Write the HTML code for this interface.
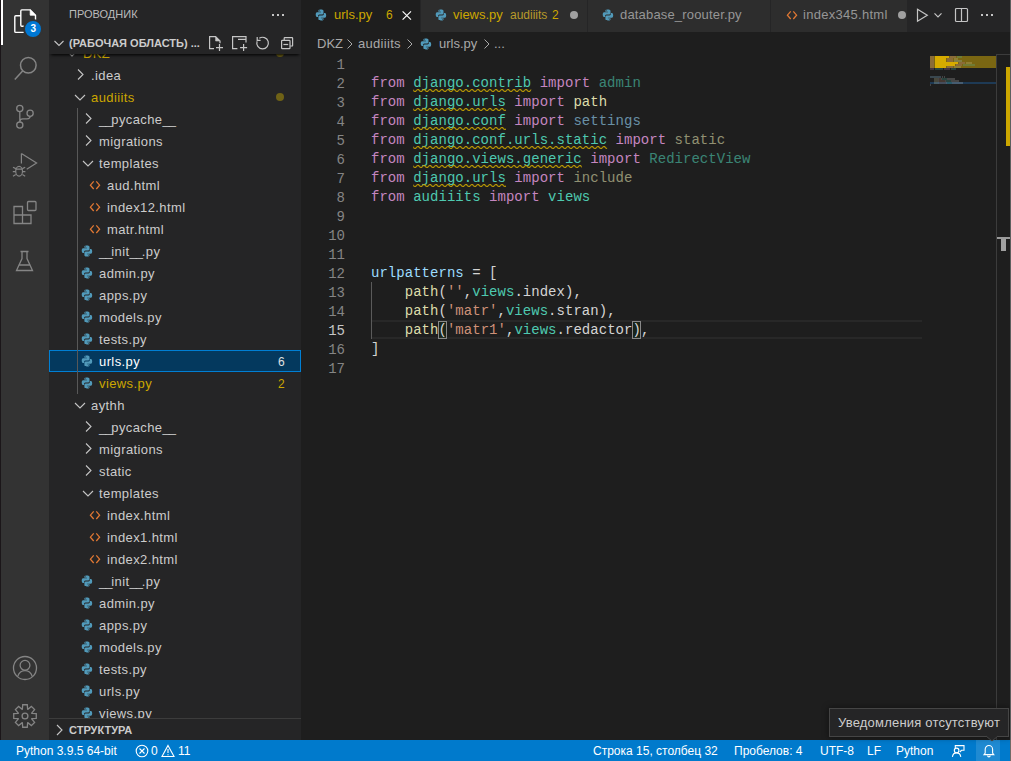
<!DOCTYPE html>
<html><head><meta charset="utf-8">
<style>
*{margin:0;padding:0;box-sizing:border-box}
html,body{width:1011px;height:761px;overflow:hidden;background:#1e1e1e;font-family:"Liberation Sans",sans-serif;font-size:13px;color:#cccccc}
.abs{position:absolute}
svg{display:block;overflow:visible}
.t{position:absolute;white-space:nowrap}
#edge{left:0;top:0;width:1px;height:740px;background:#1b1619}
#act{left:1px;top:0;width:48px;height:740px;background:#333333}
#ind{left:1px;top:0;width:2px;height:45px;background:#ffffff}
#side{left:49px;top:0;width:252px;height:740px;background:#252526;overflow:hidden}
#editor{left:301px;top:0;width:710px;height:740px;background:#1e1e1e;overflow:hidden}
#status{left:0;top:740px;width:1011px;height:21px;background:#007acc;color:#fff;font-size:12px}
.row{position:absolute;left:0;width:252px;height:22px;line-height:22px}
.row.sel{background:#04395e;outline:1px solid #007fd4;outline-offset:-1px}
.row .chev{position:absolute;top:1px}
.row .ic{position:absolute;top:0}
.row .nm{position:absolute;top:1px;white-space:nowrap;font-size:13px;letter-spacing:0.4px}
.u{letter-spacing:-1.1px}
.row .badge{position:absolute;left:229px;top:1px;font-size:12px}
.row .dot{position:absolute;left:227px;top:7px;width:8px;height:8px;border-radius:4px;background:#6f6216}
#tree{position:absolute;left:0;top:54px;width:252px;height:664px;overflow:hidden}
#tree .inner{position:absolute;left:0;top:-54px;width:252px;height:740px}
.code{position:absolute;left:70px;font-family:"Liberation Mono",monospace;font-size:14px;letter-spacing:0.03px;line-height:19px;height:19px;white-space:pre;color:#d4d4d4}
.ln{position:absolute;left:0;width:44px;text-align:right;font-family:"Liberation Mono",monospace;font-size:14px;line-height:19px;height:19px;color:#858585}
.kw{color:#c586c0}.mod{color:#4ec9b0}.fn{color:#dcdcaa}.var{color:#9cdcfe}.str{color:#ce9178}
.fade{opacity:.6}

.tab{position:absolute;top:0;height:32px;background:#2d2d2d;border-right:1px solid #252526}
.tab.act{background:#1e1e1e}
</style></head><body>
<svg width="0" height="0" style="position:absolute"><symbol id="py" viewBox="0 0 12 22"><path fill="#519aba" d="M5.9 5.5c-2.6 0-2.5 1.1-2.5 1.1v1.2h2.6v.4H2.4S.7 8 .7 10.6s1.5 2.5 1.5 2.5h.9v-1.2s-.1-1.5 1.5-1.5h2.5s1.4 0 1.4-1.4V6.9S8.7 5.5 5.9 5.5zM4.5 6.3a.45.45 0 1 1 0 .9.45.45 0 0 1 0-.9z"/><path fill="#519aba" d="M6 16.5c2.6 0 2.5-1.1 2.5-1.1v-1.2H5.9v-.4h3.6s1.7.2 1.7-2.4-1.5-2.5-1.5-2.5h-.9v1.2s.1 1.5-1.5 1.5H4.8s-1.4 0-1.4 1.4v2.1s-.2 1.4 2.6 1.4zm1.4-.8a.45.45 0 1 1 0-.9.45.45 0 0 1 0 .9z"/></symbol><symbol id="ht" viewBox="0 0 12 22"><path d="M4.7 7.3 L1.4 11.2 L4.7 15 M7.3 7.3 L10.6 11.2 L7.3 15" fill="none" stroke="#e37933" stroke-width="1.25"/></symbol><defs><pattern id="sqp" patternUnits="userSpaceOnUse" width="6" height="3"><g fill="#cca700"><polygon points="5.5,0 2.5,3 1.1,3 4.1,0"/><polygon points="4,0 6,2 6,0.6 5.4,0"/><polygon points="0,2 1,3 2.4,3 0,0.6"/></g></pattern></defs></svg>
<div id="edge" class="abs"></div>
<div id="act" class="abs"></div>

<svg class="abs" style="left:0;top:0" width="49" height="740" viewBox="0 0 49 740" fill="none" stroke-width="1.5">
 <!-- explorer -->
 <g stroke="#ffffff" stroke-width="1.4" transform="translate(0.6,0)">
  <path d="M21.2 9.9 H29.6 L34.9 15.2 V25.3 Q34.9 26.3 33.9 26.3 H21.2 Q20.2 26.3 20.2 25.3 V10.9 Q20.2 9.9 21.2 9.9 Z" />
  <path d="M29.6 9.9 V15.2 H34.9 Z" fill="#ffffff" stroke-width="0.8"/>
  <path d="M20.2 15.8 H15.2 Q14.2 15.8 14.2 16.8 V31.4 Q14.2 32.4 15.2 32.4 H27" />
 </g>
 <!-- search -->
 <g stroke="#858585">
  <circle cx="28.3" cy="65.2" r="7.8"/>
  <path d="M22.8 70.8 L14.8 79.6"/>
 </g>
 <!-- source control -->
 <g stroke="#858585" stroke-width="1.3">
  <circle cx="19.8" cy="108.5" r="3.1"/>
  <circle cx="30.1" cy="113.2" r="3.1"/>
  <circle cx="19.8" cy="125.1" r="3.1"/>
  <path d="M19.8 111.6 V122 M30.1 116.3 c0 1.8 -1.2 2.5 -3 2.5 h-4.3 c-1.9 0 -2.9 0.9 -2.9 2.6"/>
 </g>
 <!-- run debug -->
 <g stroke="#858585" stroke-width="1.2">
  <path d="M21.4 153.6 V163.5 M21.4 153.6 L36.6 163.1 L26.7 169.2"/>
  <ellipse cx="19.1" cy="171.2" rx="3.4" ry="4.9"/>
  <path d="M15.8 169.2 H22.4 M13 167.2 l2.8 1.4 M25.2 167.2 l-2.8 1.4 M12.8 171.6 h2.9 M25.4 171.6 h-2.9 M13 176.2 l2.8 -1.6 M25.2 176.2 l-2.8 -1.6"/>
 </g>
 <!-- extensions -->
 <g stroke="#858585" stroke-width="1.3">
  <path d="M14 206.5 h8.5 v8.5 h8.5 v8.5 h-17 z M14 215 h8.5 v8.5"/>
  <rect x="27.5" y="201.5" width="8.5" height="9" rx="1"/>
 </g>
 <!-- testing -->
 <g stroke="#858585" stroke-width="1.3">
  <path d="M20.5 251.5 h8 M22 251.5 v7 l-5.5 12 h16 l-5.5 -12 v-7 M18.5 265 h12"/>
 </g>
 <!-- accounts -->
 <g stroke="#858585" stroke-width="1.3">
  <circle cx="25" cy="668" r="11.5"/>
  <circle cx="25" cy="665.3" r="4.9"/>
  <path d="M17.6 676.6 c1.4 -3.8 4.2 -5.9 7.4 -5.9 s6 2.1 7.4 5.9"/>
 </g>
 <!-- settings -->
 <g stroke="#858585" stroke-width="1.3">
  <circle cx="25" cy="716" r="2.9"/>
  <path d="M31.81 713.36 L36.27 713.72 L36.27 718.28 L31.81 718.64 L31.68 718.95 L34.59 722.35 L31.35 725.59 L27.95 722.68 L27.64 722.81 L27.28 727.27 L22.72 727.27 L22.36 722.81 L22.05 722.68 L18.65 725.59 L15.41 722.35 L18.32 718.95 L18.19 718.64 L13.73 718.28 L13.73 713.72 L18.19 713.36 L18.32 713.05 L15.41 709.65 L18.65 706.41 L22.05 709.32 L22.36 709.19 L22.72 704.73 L27.28 704.73 L27.64 709.19 L27.95 709.32 L31.35 706.41 L34.59 709.65 L31.68 713.05 Z" stroke-linejoin="miter"/>
 </g>
</svg>
<div class="abs" style="left:23.2px;top:18.8px;width:20px;height:20px;border-radius:10px;border:2px solid #333333;background:#0078d4;color:#fff;font-size:10px;font-weight:bold;line-height:16px;text-align:center">3</div>

<div id="ind" class="abs"></div>
<div id="side" class="abs">
<div class="t" style="left:20px;top:7px;font-size:11px;line-height:14px;color:#bbbbbb">ПРОВОДНИК</div>
<div class="abs" style="left:223px;top:14px;width:2px;height:2px;background:#c5c5c5;box-shadow:5px 0 #c5c5c5,10px 0 #c5c5c5"></div>
<div id="tree"><div class="inner">
<div class="row" style="top:42px"><svg class="chev" style="left:15px" width="16" height="22" viewBox="0 0 16 22"><path d="M3 8 L8 13 L13 8" fill="none" stroke="#c5c5c5" stroke-width="1.1"/></svg><span class="nm" style="left:34px;color:#cca700">DKZ</span><span class="dot"></span></div>
<div class="row" style="top:64px"><svg class="chev" style="left:23px" width="16" height="22" viewBox="0 0 16 22"><path d="M6 4.5 L11 9.5 L6 14.5" fill="none" stroke="#c5c5c5" stroke-width="1.1"/></svg><span class="nm" style="left:42px">.idea</span></div>
<div class="row" style="top:86px"><svg class="chev" style="left:23px" width="16" height="22" viewBox="0 0 16 22"><path d="M3 8 L8 13 L13 8" fill="none" stroke="#c5c5c5" stroke-width="1.1"/></svg><span class="nm" style="left:42px;color:#cca700">audiiits</span><span class="dot"></span></div>
<div class="row" style="top:108px"><svg class="chev" style="left:31px" width="16" height="22" viewBox="0 0 16 22"><path d="M6 4.5 L11 9.5 L6 14.5" fill="none" stroke="#c5c5c5" stroke-width="1.1"/></svg><span class="nm" style="left:50px"><span class="u">_</span><span class="u">_</span>pycache<span class="u">_</span><span class="u">_</span></span></div>
<div class="row" style="top:130px"><svg class="chev" style="left:31px" width="16" height="22" viewBox="0 0 16 22"><path d="M6 4.5 L11 9.5 L6 14.5" fill="none" stroke="#c5c5c5" stroke-width="1.1"/></svg><span class="nm" style="left:50px">migrations</span></div>
<div class="row" style="top:152px"><svg class="chev" style="left:31px" width="16" height="22" viewBox="0 0 16 22"><path d="M3 8 L8 13 L13 8" fill="none" stroke="#c5c5c5" stroke-width="1.1"/></svg><span class="nm" style="left:50px">templates</span></div>
<div class="row" style="top:174px"><svg class="ic" style="left:40px" width="12" height="22" viewBox="0 0 12 22"><use href="#ht"/></svg><span class="nm" style="left:58px">aud.html</span></div>
<div class="row" style="top:196px"><svg class="ic" style="left:40px" width="12" height="22" viewBox="0 0 12 22"><use href="#ht"/></svg><span class="nm" style="left:58px">index12.html</span></div>
<div class="row" style="top:218px"><svg class="ic" style="left:40px" width="12" height="22" viewBox="0 0 12 22"><use href="#ht"/></svg><span class="nm" style="left:58px">matr.html</span></div>
<div class="row" style="top:240px"><svg class="ic" style="left:32px" width="12" height="22" viewBox="0 0 12 22"><use href="#py"/></svg><span class="nm" style="left:50px"><span class="u">_</span><span class="u">_</span>init<span class="u">_</span><span class="u">_</span>.py</span></div>
<div class="row" style="top:262px"><svg class="ic" style="left:32px" width="12" height="22" viewBox="0 0 12 22"><use href="#py"/></svg><span class="nm" style="left:50px">admin.py</span></div>
<div class="row" style="top:284px"><svg class="ic" style="left:32px" width="12" height="22" viewBox="0 0 12 22"><use href="#py"/></svg><span class="nm" style="left:50px">apps.py</span></div>
<div class="row" style="top:306px"><svg class="ic" style="left:32px" width="12" height="22" viewBox="0 0 12 22"><use href="#py"/></svg><span class="nm" style="left:50px">models.py</span></div>
<div class="row" style="top:328px"><svg class="ic" style="left:32px" width="12" height="22" viewBox="0 0 12 22"><use href="#py"/></svg><span class="nm" style="left:50px">tests.py</span></div>
<div class="row sel" style="top:350px"><svg class="ic" style="left:32px" width="12" height="22" viewBox="0 0 12 22"><use href="#py"/></svg><span class="nm" style="left:50px;color:#ffffff">urls.py</span><span class="badge" style="color:#e0e0e0">6</span></div>
<div class="row" style="top:372px"><svg class="ic" style="left:32px" width="12" height="22" viewBox="0 0 12 22"><use href="#py"/></svg><span class="nm" style="left:50px;color:#cca700">views.py</span><span class="badge" style="color:#cca700">2</span></div>
<div class="row" style="top:394px"><svg class="chev" style="left:23px" width="16" height="22" viewBox="0 0 16 22"><path d="M3 8 L8 13 L13 8" fill="none" stroke="#c5c5c5" stroke-width="1.1"/></svg><span class="nm" style="left:42px">aythh</span></div>
<div class="row" style="top:416px"><svg class="chev" style="left:31px" width="16" height="22" viewBox="0 0 16 22"><path d="M6 4.5 L11 9.5 L6 14.5" fill="none" stroke="#c5c5c5" stroke-width="1.1"/></svg><span class="nm" style="left:50px"><span class="u">_</span><span class="u">_</span>pycache<span class="u">_</span><span class="u">_</span></span></div>
<div class="row" style="top:438px"><svg class="chev" style="left:31px" width="16" height="22" viewBox="0 0 16 22"><path d="M6 4.5 L11 9.5 L6 14.5" fill="none" stroke="#c5c5c5" stroke-width="1.1"/></svg><span class="nm" style="left:50px">migrations</span></div>
<div class="row" style="top:460px"><svg class="chev" style="left:31px" width="16" height="22" viewBox="0 0 16 22"><path d="M6 4.5 L11 9.5 L6 14.5" fill="none" stroke="#c5c5c5" stroke-width="1.1"/></svg><span class="nm" style="left:50px">static</span></div>
<div class="row" style="top:482px"><svg class="chev" style="left:31px" width="16" height="22" viewBox="0 0 16 22"><path d="M3 8 L8 13 L13 8" fill="none" stroke="#c5c5c5" stroke-width="1.1"/></svg><span class="nm" style="left:50px">templates</span></div>
<div class="row" style="top:504px"><svg class="ic" style="left:40px" width="12" height="22" viewBox="0 0 12 22"><use href="#ht"/></svg><span class="nm" style="left:58px">index.html</span></div>
<div class="row" style="top:526px"><svg class="ic" style="left:40px" width="12" height="22" viewBox="0 0 12 22"><use href="#ht"/></svg><span class="nm" style="left:58px">index1.html</span></div>
<div class="row" style="top:548px"><svg class="ic" style="left:40px" width="12" height="22" viewBox="0 0 12 22"><use href="#ht"/></svg><span class="nm" style="left:58px">index2.html</span></div>
<div class="row" style="top:570px"><svg class="ic" style="left:32px" width="12" height="22" viewBox="0 0 12 22"><use href="#py"/></svg><span class="nm" style="left:50px"><span class="u">_</span><span class="u">_</span>init<span class="u">_</span><span class="u">_</span>.py</span></div>
<div class="row" style="top:592px"><svg class="ic" style="left:32px" width="12" height="22" viewBox="0 0 12 22"><use href="#py"/></svg><span class="nm" style="left:50px">admin.py</span></div>
<div class="row" style="top:614px"><svg class="ic" style="left:32px" width="12" height="22" viewBox="0 0 12 22"><use href="#py"/></svg><span class="nm" style="left:50px">apps.py</span></div>
<div class="row" style="top:636px"><svg class="ic" style="left:32px" width="12" height="22" viewBox="0 0 12 22"><use href="#py"/></svg><span class="nm" style="left:50px">models.py</span></div>
<div class="row" style="top:658px"><svg class="ic" style="left:32px" width="12" height="22" viewBox="0 0 12 22"><use href="#py"/></svg><span class="nm" style="left:50px">tests.py</span></div>
<div class="row" style="top:680px"><svg class="ic" style="left:32px" width="12" height="22" viewBox="0 0 12 22"><use href="#py"/></svg><span class="nm" style="left:50px">urls.py</span></div>
<div class="row" style="top:702px"><svg class="ic" style="left:32px" width="12" height="22" viewBox="0 0 12 22"><use href="#py"/></svg><span class="nm" style="left:50px">views.py</span></div>
<div class="abs" style="left:28px;top:108px;width:1px;height:286px;background:#585858"></div>
</div></div>
<!-- sticky header -->
<div class="abs" style="left:0;top:30px;width:252px;height:24px;background:#252526;box-shadow:0 3px 3px -2px #000"></div>
<svg class="abs" style="left:5px;top:31px" width="16" height="24" viewBox="0 0 16 24"><path d="M0.5 10 L5 14.5 L9.5 10" fill="none" stroke="#c5c5c5" stroke-width="1.1"/></svg>
<div class="t" style="left:20px;top:36px;font-size:11px;font-weight:bold;line-height:14px;color:#cccccc">(РАБОЧАЯ ОБЛАСТЬ) ...</div>
<svg class="abs" style="left:0;top:0" width="252" height="60" viewBox="49 0 252 60" fill="none" stroke="#c5c5c5" stroke-width="1.2">
 <path d="M214 48.6 H209.6 V36.6 H215.6 L220 41 V43.2"/>
 <path d="M215.6 36.6 V41 H220 Z" fill="#c5c5c5" stroke-width="0.6"/>
 <path d="M216 47.6 H223 M219.5 44.1 V51.1"/>
 <path d="M237.4 48.6 H232.6 V36.6 H246 V42.4 M238 39.4 H246"/>
 <path d="M240.1 47.6 H247.1 M243.6 44.1 V51.1"/>
 <path d="M259.3 38.3 A5.8 5.8 0 1 1 257.1 41.2"/>
 <path d="M257.2 37 V40.4 H260.6"/>
 <path d="M284.2 40 V38.2 Q284.2 37.6 284.8 37.6 H292 Q292.6 37.6 292.6 38.2 V45.4 Q292.6 46 292 46 H290.2"/>
 <rect x="281.6" y="40.3" width="8.4" height="8.4" rx="0.8"/>
 <path d="M283.4 44.5 H288.2"/>
</svg>
<div class="abs" style="left:0;top:718px;width:252px;height:1px;background:#3c3c3c"></div>
<svg class="abs" style="left:7px;top:724px" width="8" height="12" viewBox="0 0 8 12"><path d="M1 1 L6 6 L1 11" fill="none" stroke="#c5c5c5" stroke-width="1.1"/></svg>
<div class="t" style="left:20px;top:723px;font-size:11px;font-weight:bold;line-height:14px;color:#cccccc">СТРУКТУРА</div>
</div>
<div id="editor" class="abs">
<div class="abs" style="left:0;top:0;width:710px;height:32px;background:#252526"></div>
<div class="tab act" style="left:0;width:120px">
 <svg class="abs" style="left:14px;top:4px" width="12" height="22" viewBox="0 0 12 22"><use href="#py"/></svg>
 <span class="t" style="left:33px;top:0;line-height:30px;color:#cca700">urls.py</span>
 <span class="t" style="left:85px;top:0;line-height:30px;color:#cca700;font-size:12px">6</span>
 <svg class="abs" style="left:101px;top:11px" width="10" height="10" viewBox="0 0 10 10"><path d="M0.6 0.4 L9 8.6 M9 0.4 L0.6 8.6" stroke="#ffffff" stroke-width="1.15"/></svg>
</div>
<div class="tab" style="left:120px;width:167px">
 <svg class="abs" style="left:14px;top:4px" width="12" height="22" viewBox="0 0 12 22"><use href="#py"/></svg>
 <span class="t" style="left:32px;top:0;line-height:30px;color:#cca700">views.py</span>
 <span class="t" style="left:89px;top:0;line-height:30px;color:#b89a2a;font-size:12px">audiiits</span>
 <span class="t" style="left:131px;top:0;line-height:30px;color:#cca700;font-size:12px">2</span>
 <div class="abs" style="left:149px;top:11px;width:8px;height:8px;border-radius:4px;background:#a0a0a0"></div>
</div>
<div class="tab" style="left:287px;width:183px">
 <svg class="abs" style="left:14px;top:4px" width="12" height="22" viewBox="0 0 12 22"><use href="#py"/></svg>
 <span class="t" style="left:32px;top:0;line-height:30px;color:#969696;letter-spacing:0.17px">database_roouter.py</span>
</div>
<div class="tab" style="left:470px;width:137px">
 <svg class="abs" style="left:15px;top:4px" width="12" height="22" viewBox="0 0 12 22"><use href="#ht"/></svg>
 <span class="t" style="left:32px;top:0;line-height:30px;color:#969696;letter-spacing:0.28px">index345.html</span>
 <div class="abs" style="left:127px;top:11px;width:8px;height:8px;border-radius:4px;background:#a0a0a0"></div>
</div>
<svg class="abs" style="left:614px;top:7px" width="90" height="18" viewBox="0 0 90 18" fill="none" stroke="#c5c5c5" stroke-width="1.2">
 <path d="M2.5 2.3 L12.3 8.3 L2.5 14.3 Z"/>
 <path d="M19.5 6.3 L23 9.8 L26.5 6.3"/>
 <rect x="40.5" y="1.5" width="12" height="13" rx="1"/><path d="M46.5 1.5 v13"/>
</svg>
<div class="abs" style="left:680px;top:14px;width:2px;height:2px;background:#c5c5c5;box-shadow:5px 0 #c5c5c5,10px 0 #c5c5c5"></div>

<!-- breadcrumbs -->
<span class="t" style="left:16px;top:36px;line-height:16px;color:#a9a9a9">DKZ</span>
<svg class="abs" style="left:45px;top:38px" width="8" height="12" viewBox="0 0 8 12"><path d="M1.5 1.5 L6 6 L1.5 10.5" fill="none" stroke="#a9a9a9" stroke-width="1"/></svg>
<span class="t" style="left:57px;top:36px;line-height:16px;color:#a9a9a9;letter-spacing:0.3px">audiiits</span>
<svg class="abs" style="left:105px;top:38px" width="8" height="12" viewBox="0 0 8 12"><path d="M1.5 1.5 L6 6 L1.5 10.5" fill="none" stroke="#a9a9a9" stroke-width="1"/></svg>
<svg class="abs" style="left:119px;top:33px" width="12" height="22" viewBox="0 0 12 22"><use href="#py"/></svg>
<span class="t" style="left:138px;top:36px;line-height:16px;color:#a9a9a9">urls.py</span>
<svg class="abs" style="left:182px;top:38px" width="8" height="12" viewBox="0 0 8 12"><path d="M1.5 1.5 L6 6 L1.5 10.5" fill="none" stroke="#a9a9a9" stroke-width="1"/></svg>
<span class="t" style="left:193px;top:36px;line-height:16px;color:#a9a9a9">...</span>

<div class="abs" style="left:70px;top:320px;width:551px;height:19px;border-top:2px solid #282828;border-bottom:2px solid #282828"></div>
<div class="abs" style="left:70px;top:282px;width:1px;height:57px;background:#5a5a5a"></div>
<div class="abs" style="left:137.4px;top:321px;width:8.4px;height:18px;border:1px solid #888888;background:rgba(0,100,0,.1)"></div>
<div class="abs" style="left:331.3px;top:321px;width:8.4px;height:18px;border:1px solid #888888;background:rgba(0,100,0,.1)"></div>
<div class="ln" style="top:56px;color:#858585">1</div>
<div class="code" style="top:55px"></div>
<div class="ln" style="top:75px;color:#858585">2</div>
<div class="code" style="top:74px"><span class="kw">from</span> <span class="mod">django.contrib</span> <span class="kw">import</span> <span class="mod fade">admin</span></div>
<div class="ln" style="top:94px;color:#858585">3</div>
<div class="code" style="top:93px"><span class="kw">from</span> <span class="mod">django.urls</span> <span class="kw">import</span> <span class="fn">path</span></div>
<div class="ln" style="top:113px;color:#858585">4</div>
<div class="code" style="top:112px"><span class="kw">from</span> <span class="mod">django.conf</span> <span class="kw">import</span> <span class="var fade">settings</span></div>
<div class="ln" style="top:132px;color:#858585">5</div>
<div class="code" style="top:131px"><span class="kw">from</span> <span class="mod">django.conf.urls.static</span> <span class="kw">import</span> <span class="fn fade">static</span></div>
<div class="ln" style="top:151px;color:#858585">6</div>
<div class="code" style="top:150px"><span class="kw">from</span> <span class="mod">django.views.generic</span> <span class="kw">import</span> <span class="mod fade">RedirectView</span></div>
<div class="ln" style="top:170px;color:#858585">7</div>
<div class="code" style="top:169px"><span class="kw">from</span> <span class="mod">django.urls</span> <span class="kw">import</span> <span class="fn fade">include</span></div>
<div class="ln" style="top:189px;color:#858585">8</div>
<div class="code" style="top:188px"><span class="kw">from</span> <span class="mod">audiiits</span> <span class="kw">import</span> <span class="mod">views</span></div>
<div class="ln" style="top:208px;color:#858585">9</div>
<div class="code" style="top:207px"></div>
<div class="ln" style="top:227px;color:#858585">10</div>
<div class="code" style="top:226px"></div>
<div class="ln" style="top:246px;color:#858585">11</div>
<div class="code" style="top:245px"></div>
<div class="ln" style="top:265px;color:#858585">12</div>
<div class="code" style="top:264px"><span class="var">urlpatterns</span> = [</div>
<div class="ln" style="top:284px;color:#858585">13</div>
<div class="code" style="top:283px">    <span class="fn">path</span>(<span class="str">''</span>,<span class="mod">views</span>.index),</div>
<div class="ln" style="top:303px;color:#858585">14</div>
<div class="code" style="top:302px">    <span class="fn">path</span>(<span class="str">'matr'</span>,<span class="mod">views</span>.stran),</div>
<div class="ln" style="top:322px;color:#c6c6c6">15</div>
<div class="code" style="top:321px">    <span class="fn">path</span><span class="bm">(</span><span class="str">'matr1'</span>,<span class="mod">views</span>.redactor<span class="bm">)</span>,</div>
<div class="ln" style="top:341px;color:#858585">16</div>
<div class="code" style="top:340px">]</div>
<div class="ln" style="top:360px;color:#858585">17</div>
<div class="code" style="top:359px"></div>
<svg class="abs" style="left:0;top:0" width="710" height="400" viewBox="0 0 710 400"><g transform="translate(112.2,89)"><rect x="0" y="0" width="118.0" height="3" fill="url(#sqp)"/></g><g transform="translate(112.2,108)"><rect x="0" y="0" width="92.7" height="3" fill="url(#sqp)"/></g><g transform="translate(112.2,127)"><rect x="0" y="0" width="92.7" height="3" fill="url(#sqp)"/></g><g transform="translate(112.2,146)"><rect x="0" y="0" width="193.9" height="3" fill="url(#sqp)"/></g><g transform="translate(112.2,165)"><rect x="0" y="0" width="168.6" height="3" fill="url(#sqp)"/></g><g transform="translate(112.2,184)"><rect x="0" y="0" width="92.7" height="3" fill="url(#sqp)"/></g></svg>
<svg class="abs" style="left:0;top:0" width="710" height="740" viewBox="301 0 710 740">
<rect x="930" y="56" width="66" height="12" fill="#7a6612"/>
<rect x="930" y="82" width="66" height="2" fill="#1e3a55"/>
<rect x="930" y="56" width="4" height="2" fill="#c586c0" opacity="0.22"/>
<rect x="935" y="56" width="14" height="2" fill="#4ec9b0" opacity="0.22"/>
<rect x="950" y="56" width="6" height="2" fill="#c586c0" opacity="0.22"/>
<rect x="957" y="56" width="5" height="2" fill="#4ec9b0" opacity="0.22"/>
<rect x="930" y="58" width="4" height="2" fill="#c586c0" opacity="0.22"/>
<rect x="935" y="58" width="11" height="2" fill="#4ec9b0" opacity="0.22"/>
<rect x="947" y="58" width="6" height="2" fill="#c586c0" opacity="0.22"/>
<rect x="954" y="58" width="4" height="2" fill="#dcdcaa" opacity="0.22"/>
<rect x="930" y="60" width="4" height="2" fill="#c586c0" opacity="0.22"/>
<rect x="935" y="60" width="11" height="2" fill="#4ec9b0" opacity="0.22"/>
<rect x="947" y="60" width="6" height="2" fill="#c586c0" opacity="0.22"/>
<rect x="954" y="60" width="8" height="2" fill="#9cdcfe" opacity="0.22"/>
<rect x="930" y="62" width="4" height="2" fill="#c586c0" opacity="0.22"/>
<rect x="935" y="62" width="23" height="2" fill="#4ec9b0" opacity="0.22"/>
<rect x="959" y="62" width="6" height="2" fill="#c586c0" opacity="0.22"/>
<rect x="966" y="62" width="6" height="2" fill="#dcdcaa" opacity="0.22"/>
<rect x="930" y="64" width="4" height="2" fill="#c586c0" opacity="0.22"/>
<rect x="935" y="64" width="20" height="2" fill="#4ec9b0" opacity="0.22"/>
<rect x="956" y="64" width="6" height="2" fill="#c586c0" opacity="0.22"/>
<rect x="963" y="64" width="12" height="2" fill="#4ec9b0" opacity="0.22"/>
<rect x="930" y="66" width="4" height="2" fill="#c586c0" opacity="0.22"/>
<rect x="935" y="66" width="11" height="2" fill="#4ec9b0" opacity="0.22"/>
<rect x="947" y="66" width="6" height="2" fill="#c586c0" opacity="0.22"/>
<rect x="954" y="66" width="7" height="2" fill="#dcdcaa" opacity="0.22"/>
<rect x="930" y="68" width="4" height="2" fill="#c586c0" opacity="0.22"/>
<rect x="935" y="68" width="8" height="2" fill="#4ec9b0" opacity="0.22"/>
<rect x="944" y="68" width="6" height="2" fill="#c586c0" opacity="0.22"/>
<rect x="951" y="68" width="5" height="2" fill="#4ec9b0" opacity="0.22"/>
<rect x="930" y="76" width="11" height="2" fill="#9cdcfe" opacity="0.22"/>
<rect x="942" y="76" width="1" height="2" fill="#d4d4d4" opacity="0.22"/>
<rect x="944" y="76" width="1" height="2" fill="#d4d4d4" opacity="0.22"/>
<rect x="934" y="78" width="4" height="2" fill="#dcdcaa" opacity="0.22"/>
<rect x="938" y="78" width="1" height="2" fill="#d4d4d4" opacity="0.22"/>
<rect x="939" y="78" width="2" height="2" fill="#ce9178" opacity="0.22"/>
<rect x="941" y="78" width="1" height="2" fill="#d4d4d4" opacity="0.22"/>
<rect x="942" y="78" width="5" height="2" fill="#4ec9b0" opacity="0.22"/>
<rect x="947" y="78" width="8" height="2" fill="#d4d4d4" opacity="0.22"/>
<rect x="934" y="80" width="4" height="2" fill="#dcdcaa" opacity="0.22"/>
<rect x="938" y="80" width="1" height="2" fill="#d4d4d4" opacity="0.22"/>
<rect x="939" y="80" width="6" height="2" fill="#ce9178" opacity="0.22"/>
<rect x="945" y="80" width="1" height="2" fill="#d4d4d4" opacity="0.22"/>
<rect x="946" y="80" width="5" height="2" fill="#4ec9b0" opacity="0.22"/>
<rect x="951" y="80" width="8" height="2" fill="#d4d4d4" opacity="0.22"/>
<rect x="934" y="82" width="4" height="2" fill="#dcdcaa" opacity="0.22"/>
<rect x="938" y="82" width="1" height="2" fill="#d4d4d4" opacity="0.22"/>
<rect x="939" y="82" width="7" height="2" fill="#ce9178" opacity="0.22"/>
<rect x="946" y="82" width="1" height="2" fill="#d4d4d4" opacity="0.22"/>
<rect x="947" y="82" width="5" height="2" fill="#4ec9b0" opacity="0.22"/>
<rect x="952" y="82" width="9" height="2" fill="#d4d4d4" opacity="0.22"/>
<rect x="961" y="82" width="1" height="2" fill="#d4d4d4" opacity="0.22"/>
<rect x="962" y="82" width="1" height="2" fill="#d4d4d4" opacity="0.22"/>
<rect x="930" y="84" width="1" height="2" fill="#d4d4d4" opacity="0.22"/>
<rect x="935" y="56" width="14" height="2" fill="#d6ab00"/>
<rect x="935" y="58" width="11" height="2" fill="#d6ab00"/>
<rect x="935" y="60" width="11" height="2" fill="#d6ab00"/>
<rect x="935" y="62" width="23" height="2" fill="#d6ab00"/>
<rect x="935" y="64" width="20" height="2" fill="#d6ab00"/>
<rect x="935" y="66" width="11" height="2" fill="#d6ab00"/>
<path d="M996.5 54 V740 M996 54.5 H1010" stroke="#3c3c3c" stroke-width="1" fill="none"/>
<rect x="1006" y="67" width="4" height="79" fill="#cca700"/>
<rect x="997" y="237" width="13" height="2" fill="#9a9a9a"/>
<rect x="1001" y="239" width="5" height="12" fill="#a0a0a0"/>
</svg>
</div>
<div id="status" class="abs">
<span class="t" style="left:16px;top:1px;line-height:21px">Python 3.9.5 64-bit</span>
<svg class="abs" style="left:134px;top:4px" width="60" height="14" viewBox="0 0 60 14" fill="none" stroke="#fff" stroke-width="1.1">
 <circle cx="8" cy="7" r="5.8"/><path d="M5.5 4.5 L10.5 9.5 M10.5 4.5 L5.5 9.5"/>
 <path d="M34 1.5 L40 12.5 H28 Z M34 5 v4 M34 10.2 v1"/>
</svg>
<span class="t" style="left:151px;top:1px;line-height:21px">0</span>
<span class="t" style="left:178px;top:1px;line-height:21px">11</span>
<span class="t" style="left:593px;top:1px;line-height:21px">Строка 15, столбец 32</span>
<span class="t" style="left:734px;top:1px;line-height:21px">Пробелов: 4</span>
<span class="t" style="left:820px;top:1px;line-height:21px">UTF-8</span>
<span class="t" style="left:867px;top:1px;line-height:21px">LF</span>
<span class="t" style="left:896px;top:1px;line-height:21px">Python</span>
<div class="abs" style="left:976px;top:0;width:24px;height:21px;background:#1f8ad2"></div>
<svg class="abs" style="left:0;top:0" width="1011" height="21" viewBox="0 740 1011 21" fill="none" stroke="#fff" stroke-width="1.1">
 <path d="M955.3 748 V745.6 H964 V750.3 H961.5 L959.8 752"/>
 <circle cx="956.6" cy="750.4" r="2.3"/>
 <path d="M952.4 756.8 c0.4 -2.6 2 -3.9 4.2 -3.9 s3.8 1.3 4.2 3.9"/>
 <path d="M984 754.6 h9.8 l-1.2 -1.6 v-3.8 a3.7 3.7 0 0 0 -7.4 0 v3.8 z"/>
 <path d="M987.6 755.6 a1.3 1.3 0 0 0 2.6 0"/>
</svg>
</div>

<div class="abs" style="left:829px;top:708px;width:180px;height:29px;background:#252526;border:1px solid #454545;box-shadow:0 0 6px 1px rgba(0,0,0,.35);color:#cccccc;font-size:13px;line-height:28px;padding-left:8px;white-space:nowrap;letter-spacing:0.2px">Уведомления отсутствуют</div>
<svg class="abs" style="left:984px;top:736px" width="16" height="6" viewBox="0 0 16 6"><path d="M2 0 L8 5 L14 0" fill="#252526" stroke="#454545" stroke-width="1"/></svg>

<div class="abs" style="left:1010px;top:0;width:1px;height:740px;background:#5f5f5f"></div>
<div class="abs" style="left:1010px;top:740px;width:1px;height:21px;background:#6f6a66"></div>
</body></html>
